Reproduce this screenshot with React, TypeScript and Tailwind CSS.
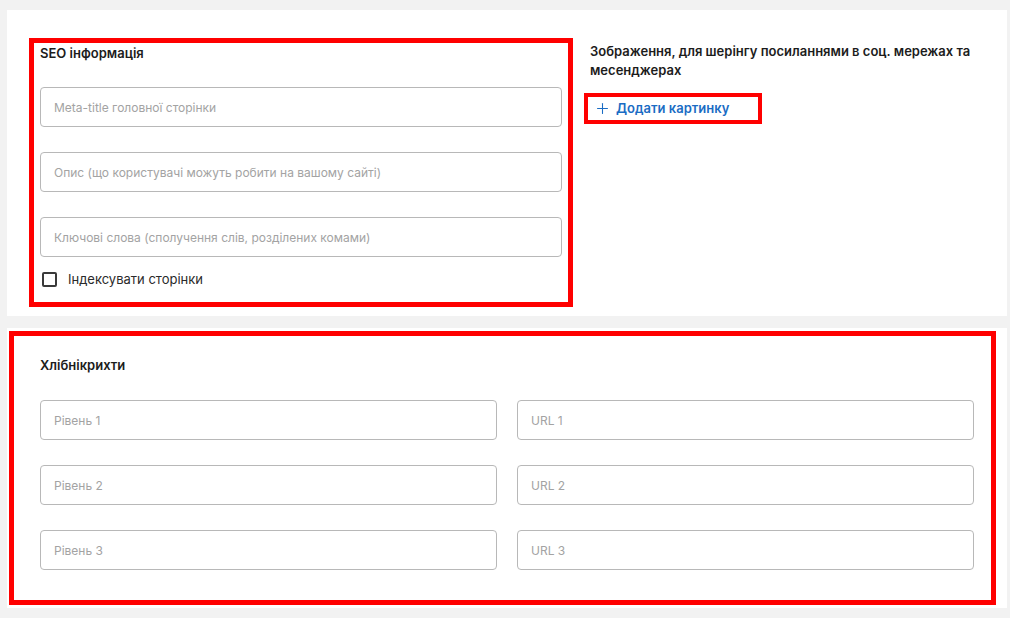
import { Plus } from 'lucide-react';

function Field({ placeholder, className = '' }: { placeholder: string; className?: string }) {
  return (
    <input
      type="text"
      placeholder={placeholder}
      className={`h-10 rounded border border-[#b8b8b8] bg-white px-[13px] text-[12px] text-[#222] outline-none placeholder:text-[#a3a3a3] ${className}`}
    />
  );
}

function App() {
  return (
    <div className="min-h-screen bg-[#f2f2f2] pl-[7px] pt-[10px] font-['Inter','Noto_Sans',sans-serif] text-[#1c1c1c]">
      {/* SEO card */}
      <div className="flex h-[306px] w-[1000px] bg-white pl-[22px] pt-[28px]">
        <div className="flex h-[269px] w-[544px] flex-col border-[5px] border-[#ff0000] px-[6px]">
          <h2 className="text-[13px] font-semibold leading-5">SEO інформація</h2>
          <div className="mt-[24px] flex flex-col gap-[25px]">
            <Field placeholder="Meta-title головної сторінки" />
            <Field placeholder="Опис (що користувачі можуть робити на вашому сайті)" />
            <Field placeholder="Ключові слова (сполучення слів, розділених комами)" />
          </div>
          <label className="mt-[12px] flex items-center gap-[11px] pl-[2px]">
            <span className="h-[15px] w-[15px] rounded-[2px] border-2 border-[#3a3a3a]" />
            <span className="text-[13px] leading-5 text-[#2a2a2a]">Індексувати сторінки</span>
          </label>
        </div>

        <div className="ml-[11px] flex w-[400px] flex-col items-start">
          <p className="ml-[6px] mt-[4px] text-[13px] font-semibold leading-[19px]">
            Зображення, для шерінгу посиланнями в соц. мережах та месенджерах
          </p>
          <button className="mt-[13px] flex h-[31px] w-[178px] items-center gap-[5px] border-4 border-[#ff0000] pl-[6px] text-[13px] font-semibold text-[#1a6cc4]">
            <Plus size={17} strokeWidth={1.5} />
            Додати картинку
          </button>
        </div>
      </div>

      {/* Breadcrumbs card */}
      <div className="mt-[12px] h-[280px] w-[1000px] bg-white pl-[2px] pt-[3px]">
        <div className="h-[274px] w-[987px] border-[5px] border-[#ff0000] pl-[26px]">
          <h2 className="mt-[19px] text-[13px] font-semibold leading-5">Хлібнікрихти</h2>
          <div className="mt-[25px] grid w-[934px] grid-cols-2 gap-x-[20px] gap-y-[25px]">
            <Field placeholder="Рівень 1" />
            <Field placeholder="URL 1" />
            <Field placeholder="Рівень 2" />
            <Field placeholder="URL 2" />
            <Field placeholder="Рівень 3" />
            <Field placeholder="URL 3" />
          </div>
        </div>
      </div>
    </div>
  );
}

export default App;
